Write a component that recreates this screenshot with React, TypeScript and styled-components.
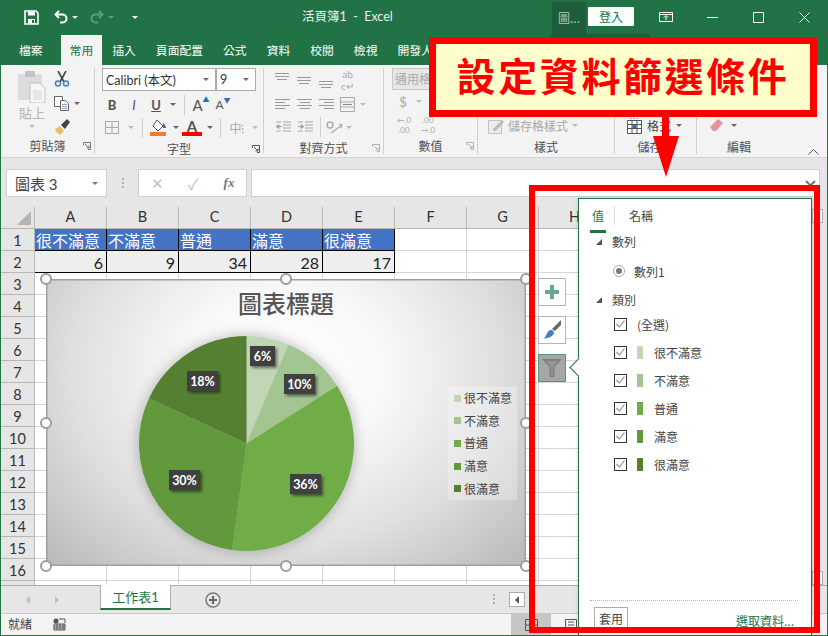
import React from 'react';
import styled, { createGlobalStyle } from 'styled-components';

const GREEN = '#217346';
const CJK = '"Noto Sans CJK TC", sans-serif';
const LATIN = 'Lato, "Noto Sans CJK TC", sans-serif';

const GlobalStyle = createGlobalStyle`
  html, body { margin: 0; padding: 0; background: #fff; }
  * { box-sizing: border-box; }
`;

const Window = styled.div`
  position: relative;
  width: 828px;
  height: 636px;
  overflow: hidden;
  border: 1px solid ${GREEN};
  border-top: none;
  display: flex;
  flex-direction: column;
  font-family: ${CJK};
  font-size: 12px;
  color: #444;
  background: #e6e6e6;
`;

/* title bar */
const TitleBar = styled.div`
  height: 34px;
  flex: none;
  display: flex;
  align-items: stretch;
  background: ${GREEN};
  color: #fff;
`;
const Quick = styled.div`
  width: 301px;
  display: flex;
  align-items: center;
  padding-left: 22px;
`;
const QuickSlot = styled.span<{ $w: number; $flip?: boolean }>`
  width: ${(p) => p.$w}px;
  display: flex;
  align-items: center;
  justify-content: center;
  ${(p) => (p.$flip ? 'transform: scaleX(-1);' : '')}
`;
const DocTitle = styled.div`
  flex: 1;
  line-height: 34px;
  font-size: 12.5px;
  color: #e8f1ec;
  white-space: pre;
  font-family: ${LATIN};
`;
const ContextTab = styled.div`
  width: 34px;
  margin-top: 2px;
  background: #1e5c3a;
  color: #a9cdb9;
  line-height: 32px;
  text-align: center;
  font-size: 12px;
`;
const SignIn = styled.div`
  width: 46px;
  height: 19px;
  margin: 7px 9px 0 2px;
  background: #fff;
  color: ${GREEN};
  border-radius: 1px;
  line-height: 19px;
  text-align: center;
  font-size: 12px;
`;
const WinButton = styled.div`
  width: 46px;
  display: flex;
  align-items: center;
  justify-content: center;
`;

/* tab row */
const TabRow = styled.div`
  height: 31px;
  flex: none;
  display: flex;
  background: ${GREEN};
  color: #fff;
  position: relative;
`;
const RibbonTab = styled.div<{ $active?: boolean; $file?: boolean }>`
  padding: 0 ${(p) => (p.$file ? '18px' : p.$active ? '9px' : '10px')};
  margin-top: 1px;
  line-height: 30px;
  font-size: 11.8px;
  ${(p) => (p.$active ? `background:#f3f3f3;color:${GREEN};` : '')}
`;
const ContextStrip = styled.div`
  width: 99px;
  height: 3px;
  margin-left: auto;
  margin-right: 177px;
  background: #1e5c3a;
`;

/* ribbon */
const Ribbon = styled.div`
  height: 93px;
  flex: none;
  display: flex;
  background: #f3f3f3;
  border-bottom: 1px solid #d4d4d4;
  padding-top: 3px;
  position: relative;
`;
const Group = styled.section<{ $w: number; $last?: boolean }>`
  width: ${(p) => p.$w}px;
  flex: none;
  height: 86px;
  border-right: ${(p) => (p.$last ? 'none' : '1px solid #d0d0d0')};
  display: flex;
  flex-direction: column;
`;
const GroupBody = styled.div<{ $pad?: number; $row?: boolean }>`
  height: 71px;
  padding-left: ${(p) => p.$pad ?? 0}px;
  display: flex;
  flex-direction: ${(p) => (p.$row ? 'row' : 'column')};
`;
const GroupLabel = styled.div`
  position: relative;
  flex: 1;
  padding-top: 1px;
  text-align: center;
  font-size: 12px;
  line-height: 17px;
  color: #505050;
`;
const Launcher = styled.span`
  position: absolute;
  right: 3px;
  top: 6px;
  display: flex;
`;
const PasteCol = styled.div`
  width: 34px;
  display: flex;
  flex-direction: column;
  align-items: center;
  padding-top: 3px;
  color: #b4b4b4;
  font-size: 13px;
  line-height: 15px;
`;
const PasteText = styled.span`
  margin: 2px 0 5px;
`;
const SmallCol = styled.div`
  display: flex;
  flex-direction: column;
  gap: 8px;
  padding-top: 3px;
  margin-left: 4px;
`;
const ToolRow = styled.div<{ $h?: number; $pad?: number; $mt?: number }>`
  height: ${(p) => p.$h ?? 23}px;
  padding-left: ${(p) => p.$pad ?? 0}px;
  margin-top: ${(p) => p.$mt ?? 0}px;
  display: flex;
  align-items: center;
  flex: none;
`;
const Tool = styled.span<{ $w: number; $color?: string; $font?: string; $size?: number; $weight?: number; $italic?: boolean; $line?: boolean }>`
  width: ${(p) => p.$w}px;
  flex: none;
  display: flex;
  align-items: center;
  justify-content: center;
  color: ${(p) => p.$color ?? '#555'};
  font-family: ${(p) => p.$font ?? LATIN};
  font-size: ${(p) => p.$size ?? 12}px;
  font-weight: ${(p) => p.$weight ?? 400};
  font-style: ${(p) => (p.$italic ? 'italic' : 'normal')};
  text-decoration: ${(p) => (p.$line ? 'underline' : 'none')};
`;
const StackTool = styled.span<{ $w: number; $size: number }>`
  width: ${(p) => p.$w}px;
  flex: none;
  display: flex;
  flex-direction: column;
  align-items: center;
  color: #aaa;
  font-family: Lato, sans-serif;
  font-size: ${(p) => p.$size}px;
  line-height: ${(p) => p.$size + 2}px;
`;
const ColorA = styled.span<{ $w: number }>`
  width: ${(p) => p.$w}px;
  height: 17px;
  flex: none;
  text-align: center;
  font-family: ${LATIN};
  font-weight: 700;
  font-size: 15px;
  line-height: 14px;
  color: #555;
  border-bottom: 4px solid #ff0000;
`;
const SizeMark = styled.sup`
  color: #2f6db5;
  font-size: 7px;
  line-height: 7px;
  align-self: flex-start;
`;
const Caret = styled.i<{ $color?: string }>`
  display: block;
  width: 0;
  height: 0;
  border-left: 3.5px solid transparent;
  border-right: 3.5px solid transparent;
  border-top: 3.5px solid ${(p) => p.$color ?? '#666'};
`;
const ToolSep = styled.span<{ $mx: number }>`
  width: 1px;
  height: 20px;
  flex: none;
  margin: 0 ${(p) => p.$mx}px;
  background: #cfcfcf;
`;
const FontSelect = styled.div<{ $w: number }>`
  width: ${(p) => p.$w}px;
  height: 23px;
  flex: none;
  background: #fff;
  border: 1px solid #ababab;
  display: flex;
  align-items: center;
  justify-content: space-between;
  padding: 0 6px 0 3px;
  font-family: ${LATIN};
  font-size: 12.5px;
  color: #333;
`;
const FormatBox = styled.div`
  width: 60px;
  height: 22px;
  margin-left: 8px;
  background: #e6e6e6;
  border: 1px solid #c6c6c6;
  color: #a8a8a8;
  font-size: 12px;
  line-height: 20px;
  padding-left: 2px;
  white-space: nowrap;
  overflow: hidden;
`;
const StyleText = styled.span`
  color: #a8a8a8;
  font-size: 12px;
  margin: 0 4px 0 3px;
`;
const CellText = styled.span`
  color: #444;
  font-size: 12px;
  margin: 0 5px;
`;
const Collapse = styled.span`
  position: absolute;
  right: 8px;
  bottom: 2px;
  display: flex;
`;

/* formula bar */
const FormulaBand = styled.div`
  height: 49px;
  flex: none;
  display: flex;
  padding: 11px 7px 0 5px;
  background: #e6e6e6;
`;
const FieldBox = styled.div<{ $w?: number }>`
  height: 28px;
  ${(p) => (p.$w ? `width:${p.$w}px;flex:none;` : 'flex:1;margin-left:4px;justify-content:flex-end;padding-right:3px;')}
  background: #fff;
  border: 1px solid #d0d0d0;
  display: flex;
  align-items: center;
`;
const NameText = styled.span`
  flex: 1;
  padding-left: 8px;
  font-size: 15px;
  color: #444;
  font-family: ${LATIN};
`;
const GripSlot = styled.div`
  width: 31px;
  flex: none;
  display: flex;
  flex-direction: column;
  align-items: center;
  justify-content: center;
  gap: 2px;
  height: 28px;
`;
const Grip = styled.i`
  width: 2px;
  height: 2px;
  background: #b0b0b0;
`;
const FxText = styled.span`
  font-family: "Liberation Serif", serif;
  font-style: italic;
  font-weight: 700;
  font-size: 13px;
  color: #777;
`;

/* sheet */
const SheetRow = styled.div`
  height: 378px;
  flex: none;
  display: flex;
`;
const Sheet = styled.div`
  position: relative;
  width: 811px;
  flex: none;
  overflow: hidden;
  background: #fff;
`;
const SheetGrid = styled.div`
  display: grid;
  grid-template-columns: 34px repeat(11, 72px);
  grid-auto-rows: 22px;
`;
const Corner = styled.div`
  background: #e6e6e6;
  border-right: 1px solid #b8b8b8;
  border-bottom: 1px solid #b8b8b8;
  position: relative;
  &::after {
    content: '';
    position: absolute;
    right: 3px;
    bottom: 3px;
    border-left: 14px solid transparent;
    border-bottom: 14px solid #b5b5b5;
  }
`;
const HeadCell = styled.div<{ $row?: boolean }>`
  background: #e6e6e6;
  border-right: 1px solid #b8b8b8;
  border-bottom: 1px solid #b8b8b8;
  display: flex;
  align-items: center;
  justify-content: center;
  padding: ${(p) => (p.$row ? '2px 0 0' : '0 0 3px')};
  font-family: ${LATIN};
  font-size: 14.5px;
  color: #333;
`;
const Cell = styled.div<{ $tone?: 'head' | 'value' }>`
  border-right: 1px solid ${(p) => (p.$tone ? '#000' : '#d6d6d6')};
  border-bottom: 1px solid ${(p) => (p.$tone ? '#000' : '#d6d6d6')};
  background: ${(p) => (p.$tone === 'head' ? '#4472c4' : p.$tone === 'value' ? '#eeeeee' : '#fff')};
  color: ${(p) => (p.$tone === 'head' ? '#fff' : '#222')};
  text-align: ${(p) => (p.$tone === 'value' ? 'right' : 'left')};
  padding: 0 3px 0 1px;
  font-family: ${LATIN};
  font-size: 16px;
  line-height: 23px;
  white-space: nowrap;
  overflow: hidden;
`;
const VScroll = styled.div`
  flex: 1;
  padding-top: 2px;
  display: flex;
  flex-direction: column;
  justify-content: space-between;
  padding-right: 4px;
`;
const ScrollButton = styled.div`
  height: 14px;
  background: #fff;
  border: 1px solid #ababab;
`;

/* chart */
const Chart = styled.div`
  position: absolute;
  left: 45px;
  top: 72px;
  width: 480px;
  height: 287px;
  box-shadow: inset 0 0 0 1.5px #a0a0a0;
  background: radial-gradient(ellipse farthest-corner at 50% 32%, #fff 0%, #f8f8f8 30%, #e0e0e0 62%, #b8b8b8 100%);
`;
const ChartTitle = styled.div`
  position: relative;
  text-align: center;
  padding-top: 7px;
  font-size: 24px;
  line-height: 34px;
  color: #565656;
  font-weight: 500;
`;
const PieSvg = styled.svg`
  position: absolute;
  left: 0;
  top: 0;
`;
const Legend = styled.div`
  position: absolute;
  right: 9px;
  top: 108px;
  width: 69px;
  height: 113px;
  padding: 0 0 0 6px;
  background: rgba(255, 255, 255, 0.28);
  display: flex;
  flex-direction: column;
  justify-content: space-around;
`;
const LegendRow = styled.div`
  display: flex;
  align-items: center;
  gap: 3px;
  font-size: 12px;
  line-height: 16px;
  color: #444;
  white-space: nowrap;
`;
const LegendSwatch = styled.i<{ $c: string }>`
  width: 7px;
  height: 7px;
  background: ${(p) => p.$c};
`;
const Handle = styled.i<{ $x: number; $y: number }>`
  position: absolute;
  left: ${(p) => p.$x}%;
  top: ${(p) => p.$y}%;
  width: 12px;
  height: 12px;
  margin: -6px 0 0 -6px;
  border-radius: 50%;
  background: #fff;
  border: 2px solid #9c9c9c;
`;

/* chart side tools */
const ChartTools = styled.div`
  position: absolute;
  left: 537px;
  top: 278px;
  display: flex;
  flex-direction: column;
  gap: 10px;
`;
const ChartTool = styled.div<{ $on?: boolean }>`
  width: 28px;
  height: 28px;
  display: flex;
  align-items: center;
  justify-content: center;
  background: ${(p) => (p.$on ? '#a6a6a6' : '#fff')};
  border: 1px solid ${(p) => (p.$on ? '#4f9a73' : '#b4b4b4')};
`;

/* filter pane */
const Pane = styled.div`
  position: absolute;
  left: 577px;
  top: 198px;
  width: 234px;
  height: 438px;
  background: #fff;
  border: 1px solid ${GREEN};
  display: flex;
  flex-direction: column;
  box-shadow: 0 0 4px rgba(0, 0, 0, 0.15);
  &::before {
    content: '';
    position: absolute;
    left: -7px;
    top: 162px;
    width: 12px;
    height: 12px;
    background: #fff;
    border-left: 1px solid ${GREEN};
    border-bottom: 1px solid ${GREEN};
    transform: rotate(45deg);
  }
`;
const PaneTabs = styled.div`
  height: 34px;
  flex: none;
  display: flex;
  align-items: flex-start;
  padding: 7px 0 0 11px;
`;
const PaneTab = styled.div<{ $on?: boolean }>`
  height: 27px;
  padding: 0 ${(p) => (p.$on ? '2px' : '0')};
  line-height: 20px;
  color: ${(p) => (p.$on ? GREEN : '#444')};
  border-bottom: 3px solid ${(p) => (p.$on ? GREEN : 'transparent')};
`;
const PaneTabSep = styled.span`
  width: 1px;
  height: 19px;
  background: #dcdcdc;
  margin: 0 14px 0 8px;
`;
const TreeHead = styled.div`
  height: 18px;
  display: flex;
  align-items: center;
  padding-left: 17px;
  gap: 10px;
  line-height: 18px;
`;
const TreeArrow = styled.i`
  width: 0;
  height: 0;
  border-left: 6px solid transparent;
  border-bottom: 6px solid #555;
`;
const RadioRow = styled.div`
  height: 28px;
  margin: 6px 0;
  display: flex;
  align-items: center;
  padding-left: 34px;
  gap: 9px;
`;
const Radio = styled.i`
  width: 12px;
  height: 12px;
  border-radius: 50%;
  border: 1px solid #a8a8a8;
  display: flex;
  align-items: center;
  justify-content: center;
  &::after {
    content: '';
    width: 6px;
    height: 6px;
    border-radius: 50%;
    background: #777;
  }
`;
const CheckList = styled.div`
  margin-top: 1px;
`;
const CheckRow = styled.div`
  height: 28px;
  display: flex;
  align-items: center;
  padding-left: 35px;
`;
const CheckBox = styled.span`
  width: 13px;
  height: 13px;
  flex: none;
  border: 1px solid #333;
  display: flex;
  align-items: center;
  justify-content: center;
`;
const CheckSwatch = styled.i<{ $c: string }>`
  width: 6px;
  height: 13px;
  margin: 0 11px 0 10px;
  background: ${(p) => p.$c};
`;
const AllLabel = styled.span`
  margin-left: 10px;
`;
const PaneFooter = styled.div`
  margin: auto 13px 0 11px;
  height: 35px;
  border-top: 1px dotted #b8b8b8;
  padding: 6px 4px 0 4px;
  display: flex;
  justify-content: space-between;
`;
const ApplyButton = styled.div`
  width: 34px;
  height: 24px;
  border: 1px solid #ababab;
  text-align: center;
  line-height: 22px;
  color: #444;
`;
const SelectLink = styled.span`
  margin-top: 6px;
  line-height: 15px;
  color: ${GREEN};
  text-decoration: underline;
`;

/* sheet tabs */
const TabBar = styled.div`
  height: 28px;
  flex: none;
  display: flex;
  align-items: flex-start;
  background: #e6e6e6;
  border-top: 1px solid #ababab;
`;
const NavArrow = styled.i<{ $left?: boolean; $ml: number }>`
  margin: 10px 0 0 ${(p) => p.$ml}px;
  width: 0;
  height: 0;
  border-top: 4px solid transparent;
  border-bottom: 4px solid transparent;
  ${(p) => (p.$left ? 'border-right: 4px solid #bdbdbd;' : 'border-left: 4px solid #bdbdbd;')}
`;
const SheetTab = styled.div`
  width: 71px;
  height: 25px;
  margin: -1px 0 0 41px;
  background: #fff;
  border: 1px solid #ababab;
  border-top: none;
  border-bottom: 2px solid ${GREEN};
  color: ${GREEN};
  text-align: center;
  line-height: 25px;
  font-size: 13px;
  font-family: ${LATIN};
`;
const AddSheet = styled.span`
  margin: 6px 0 0 34px;
  display: flex;
`;
const TabGrip = styled.div`
  margin: 8px 0 0 272px;
  display: flex;
  flex-direction: column;
  gap: 2px;
`;
const HScroll = styled.div`
  width: 16px;
  height: 15px;
  margin: 6px 0 0 14px;
  background: #fff;
  border: 1px solid #ababab;
  display: flex;
  align-items: center;
  justify-content: center;
`;
const HArrow = styled.i`
  width: 0;
  height: 0;
  border-top: 4px solid transparent;
  border-bottom: 4px solid transparent;
  border-right: 4px solid #555;
`;

/* status bar */
const StatusBar = styled.div`
  height: 22px;
  flex: none;
  display: flex;
  align-items: stretch;
  background: #f3f3f3;
  border-top: 1px solid #c8c8c8;
`;
const StatusText = styled.span`
  margin-left: 7px;
  width: 45px;
  line-height: 20px;
  color: #444;
`;
const StatusIcon = styled.span`
  display: flex;
  align-items: center;
`;
const ViewButton = styled.div<{ $on?: boolean; $ml?: number }>`
  width: 40px;
  margin-left: ${(p) => p.$ml ?? 0}px;
  background: ${(p) => (p.$on ? '#c6c6c6' : 'transparent')};
  display: flex;
  align-items: center;
  justify-content: center;
`;

/* hand-drawn callouts laid over the screenshot */
const Callout = styled.div`
  position: absolute;
  left: 428px;
  top: 37px;
  width: 388px;
  height: 80px;
  background: #ffffcc;
  border: 7px solid #ff0000;
  color: #ff0000;
  font-weight: 700;
  font-size: 39px;
  letter-spacing: 2.6px;
  line-height: 61px;
  text-align: center;
  white-space: nowrap;
`;
const CalloutArrow = styled.svg`
  position: absolute;
  left: 652px;
  top: 117px;
`;
const RedFrame = styled.div`
  position: absolute;
  left: 528px;
  top: 185px;
  width: 291px;
  height: 448px;
  border: 6px solid #ff0000;
`;

function SaveIcon() {
  return (
    <svg width="15" height="15" viewBox="0 0 15 15">
      <path d="M1 1h11l2 2v11H1z" fill="none" stroke="#fff" strokeWidth="1.6" />
      <path d="M4 1.5h7v4H4zM4 9h7v5H4z" fill="#fff" />
      <path d="M8 10h2v3H8z" fill={GREEN} />
    </svg>
  );
}
function UndoIcon({ color }: { color: string }) {
  return (
    <svg width="15" height="14" viewBox="0 0 15 14">
      <path d="M5 1L1.5 4.5 5 8" fill="none" stroke={color} strokeWidth="2" />
      <path d="M2 4.5h6.5a4 4 0 0 1 0 8H6" fill="none" stroke={color} strokeWidth="2" />
    </svg>
  );
}
function AlignIcon({ rows, offset = 0 }: { rows: [number, number][]; offset?: number }) {
  return (
    <svg width="16" height="16" viewBox="0 0 16 16">
      {rows.map(([x, w], i) => (
        <rect key={i} x={x} y={offset + i * 3} width={w} height="1" fill="#9a9a9a" />
      ))}
    </svg>
  );
}
function LauncherIcon({ color = '#777' }: { color?: string }) {
  return (
    <svg width="8" height="8" viewBox="0 0 8 8">
      <path d="M0.5 3V0.5H7.5V7.5H5M2 2l4 4M6 3.5V6H3.5" fill="none" stroke={color} strokeWidth="1" />
    </svg>
  );
}
function PasteIcon() {
  return (
    <svg width="28" height="32" viewBox="0 0 28 32">
      <rect x="0" y="3" width="24" height="26" fill="#dcdcdc" />
      <rect x="7" y="0" width="10" height="6" fill="#c4c4c4" />
      <path d="M12 12h10l5 5v15H12z" fill="#f6f6f6" stroke="#c0c0c0" />
      <path d="M15 19h9v10h-9z" fill="#e6e6e6" />
    </svg>
  );
}
function ScissorsIcon() {
  return (
    <svg width="16" height="16" viewBox="0 0 16 16">
      <path d="M4 0l6 11M12 0L6 11" stroke="#444" strokeWidth="1.6" fill="none" />
      <circle cx="4" cy="12.5" r="2.5" fill="none" stroke="#4a7fb5" strokeWidth="1.5" />
      <circle cx="12" cy="12.5" r="2.5" fill="none" stroke="#4a7fb5" strokeWidth="1.5" />
    </svg>
  );
}
function CopyIcon() {
  return (
    <svg width="16" height="15" viewBox="0 0 16 15">
      <path d="M0.5 0.5h8v10h-8z" fill="#fff" stroke="#666" />
      <path d="M6.5 4.5h5l3 3v7h-8z" fill="#fff" stroke="#666" />
      <path d="M8 8.5h5M8 10.5h5M8 12.5h5" stroke="#8aa6c4" />
    </svg>
  );
}
function PainterIcon() {
  return (
    <svg width="16" height="16" viewBox="0 0 16 16">
      <path d="M1 10l5-3 4 5-4 4c-2-1-4-3-5-6z" fill="#e9bd6b" />
      <path d="M7 6l6-6 3 3-5 7z" fill="#444" />
    </svg>
  );
}
function BordersIcon() {
  return (
    <svg width="14" height="13" viewBox="0 0 14 13">
      <path d="M0.5 0.5h13v12h-13zM7 0.5v12M0.5 6.5h13" fill="none" stroke="#a8a8a8" />
    </svg>
  );
}
function FillIcon() {
  return (
    <svg width="17" height="16" viewBox="0 0 17 16">
      <path d="M7 0l6 6-5 5-5-5z" fill="#fff" stroke="#555" />
      <path d="M13 3c2 2 3 3 3 5h-3z" fill="#2f6db5" />
      <rect x="0" y="12" width="16" height="4" fill="#ed7d31" />
    </svg>
  );
}
function ArrowsBox({ flip }: { flip?: boolean }) {
  return (
    <svg width="16" height="13" viewBox="0 0 16 13">
      <path d="M8 1h8M8 4h8M8 7h8M8 10h8M1 1h5M1 10h5" stroke="#a8a8a8" />
      <path d={flip ? 'M1 5.5h3V3.5l3 2-3 2v-2' : 'M7 5.5H4V3.5l-3 2 3 2v-2'} fill="#a8a8a8" stroke="#a8a8a8" />
    </svg>
  );
}
function MergeIcon() {
  return (
    <svg width="15" height="15" viewBox="0 0 15 15">
      <path d="M0.5 0.5h14v14h-14zM0.5 5h14M0.5 10h14" fill="none" stroke="#a8a8a8" />
      <path d="M3 7.5h9" stroke="#888" />
    </svg>
  );
}
function OrientIcon() {
  return (
    <svg width="18" height="16" viewBox="0 0 18 16">
      <path d="M6 14L17 6M14 5l3 1-1 3" stroke="#aaa" fill="none" strokeWidth="1.2" />
      <circle cx="5" cy="6" r="3" fill="none" stroke="#aaa" strokeWidth="1.4" />
    </svg>
  );
}
function StyleIcon() {
  return (
    <svg width="17" height="16" viewBox="0 0 17 16">
      <path d="M0.5 2.5h13v13h-13z" fill="#ededed" stroke="#c2c2c2" />
      <path d="M5 11L14 2l2 2-8 9H5z" fill="#bcbcbc" />
    </svg>
  );
}
function TableIcon() {
  return (
    <svg width="15" height="16" viewBox="0 0 15 16">
      <path d="M0.5 2.5h14v13h-14zM0.5 6.5h14M0.5 10.5h14M5 2.5v13M10 2.5v13" fill="#fff" stroke="#555" />
      <rect x="5.5" y="7" width="4" height="3" fill="#2f6db5" />
      <path d="M3 0h9" stroke="#2f6db5" strokeDasharray="2 1" />
    </svg>
  );
}
function EraserIcon() {
  return (
    <svg width="14" height="13" viewBox="0 0 14 13">
      <path d="M0 8l8-8 5 4-7 8H3z" fill="#e9919c" />
    </svg>
  );
}
function FunnelIcon() {
  return (
    <svg width="20" height="18" viewBox="0 0 20 18">
      <path d="M0 0h20l-7.5 8v10h-5V8z" fill="#808080" />
      <path d="M4 2h12l-5 5.5V16H9V7.5z" fill="#969696" />
    </svg>
  );
}
function BrushIcon() {
  return (
    <svg width="20" height="20" viewBox="0 0 20 20">
      <path d="M19 0v5l-6 6-3-2z" fill="#666" />
      <path d="M10 10l2 2c0 4-5 6-11 7 3-1 3-5 5-7 1-2 3-2 4-2z" fill="#3f7cc0" />
    </svg>
  );
}
function SheetGlyph() {
  return (
    <svg width="13" height="13" viewBox="0 0 13 13">
      <circle cx="3" cy="3" r="2.5" fill="#555" />
      <path d="M1 6h11v6H1zM1 8h11M1 10h11M4 6v6M7 6v6M10 6v6M6 1h6v4" fill="none" stroke="#555" />
    </svg>
  );
}
function CheckMark() {
  return (
    <svg width="9" height="8" viewBox="0 0 9 8">
      <path d="M.5 4l3 3 5-6.5" fill="none" stroke="#8a8a8a" strokeWidth="1.1" />
    </svg>
  );
}

const pieData = [
  { name: '很不滿意', value: 6, color: '#c1d6b5' },
  { name: '不滿意', value: 9, color: '#a3c591' },
  { name: '普通', value: 34, color: '#70ad47' },
  { name: '滿意', value: 28, color: '#62993c' },
  { name: '很滿意', value: 17, color: '#548030' },
];
const pieLabels = [
  { text: '6%', x: 204, y: 67, w: 25 },
  { text: '10%', x: 238, y: 95, w: 31 },
  { text: '36%', x: 244, y: 195, w: 31 },
  { text: '30%', x: 123, y: 191, w: 31 },
  { text: '18%', x: 141, y: 92, w: 31 },
];

function Pie() {
  const cx = 200.5;
  const cy = 164.5;
  const r = 107.5;
  const total = pieData.reduce((sum, d) => sum + d.value, 0);
  let angle = -Math.PI / 2;
  return (
    <PieSvg width="480" height="287" viewBox="0 0 480 287">
      <defs>
        <filter id="pieShadow" x="-20%" y="-20%" width="140%" height="140%">
          <feDropShadow dx="0" dy="0" stdDeviation="7" floodColor="#000" floodOpacity="0.28" />
        </filter>
        <filter id="tagShadow" x="-30%" y="-30%" width="170%" height="170%">
          <feDropShadow dx="2" dy="2" stdDeviation="1.5" floodColor="#000" floodOpacity="0.5" />
        </filter>
      </defs>
      <g filter="url(#pieShadow)">
        {pieData.map((d) => {
          const start = angle;
          angle += (d.value / total) * Math.PI * 2;
          const large = angle - start > Math.PI ? 1 : 0;
          const path = `M${cx} ${cy}L${cx + r * Math.cos(start)} ${cy + r * Math.sin(start)}A${r} ${r} 0 ${large} 1 ${cx + r * Math.cos(angle)} ${cy + r * Math.sin(angle)}Z`;
          return <path key={d.name} d={path} fill={d.color} />;
        })}
      </g>
      {pieLabels.map((l) => (
        <g key={l.text}>
          <rect x={l.x} y={l.y} width={l.w} height="20" fill="#403f40" filter="url(#tagShadow)" />
          <text x={l.x + l.w / 2} y={l.y + 14.5} textAnchor="middle" fill="#fff" fontFamily="Lato, sans-serif" fontWeight="700" fontSize="12.5">
            {l.text}
          </text>
        </g>
      ))}
    </PieSvg>
  );
}

// columns past H sit under the pane, so they carry no letter
const columns = ['A', 'B', 'C', 'D', 'E', 'F', 'G', 'H', '', '', ''];
const headRow = ['很不滿意', '不滿意', '普通', '滿意', '很滿意'];
const valueRow = [6, 9, 34, 28, 17];
const rowNumbers = Array.from({ length: 17 }, (_, i) => i + 1);
const handles: [number, number][] = [
  [0, 0], [50, 0], [100, 0], [0, 50], [100, 50], [0, 100], [50, 100], [100, 100],
];
const tabs = ['插入', '頁面配置', '公式', '資料', '校閱', '檢視', '開發人員'];

export default function App() {
  return (
    <Window>
      <GlobalStyle />
      <TitleBar>
        <Quick>
          <QuickSlot $w={16}><SaveIcon /></QuickSlot>
          <QuickSlot $w={14} />
          <QuickSlot $w={16}><UndoIcon color="#fff" /></QuickSlot>
          <QuickSlot $w={12}><Caret $color="#dce9e2" /></QuickSlot>
          <QuickSlot $w={8} />
          <QuickSlot $w={16} $flip><UndoIcon color="#5d9b79" /></QuickSlot>
          <QuickSlot $w={12}><Caret $color="#5d9b79" /></QuickSlot>
          <QuickSlot $w={14} />
          <QuickSlot $w={8}><Caret $color="#fff" /></QuickSlot>
        </Quick>
        <DocTitle>活頁簿1  -  Excel</DocTitle>
        <ContextTab>圖...</ContextTab>
        <SignIn>登入</SignIn>
        <WinButton>
          <svg width="14" height="10" viewBox="0 0 14 10">
            <path d="M0.5 0.5h13v9h-13zM0.5 2.5h13M7 8V4M5 5.5L7 3.5l2 2" fill="none" stroke="#fff" />
          </svg>
        </WinButton>
        <WinButton>
          <svg width="11" height="1" viewBox="0 0 11 1"><path d="M0 .5h11" stroke="#fff" /></svg>
        </WinButton>
        <WinButton>
          <svg width="11" height="11" viewBox="0 0 11 11"><path d="M.5.5h10v10H.5z" fill="none" stroke="#fff" /></svg>
        </WinButton>
        <WinButton>
          <svg width="11" height="11" viewBox="0 0 11 11"><path d="M.5.5l10 10M10.5.5l-10 10" stroke="#fff" /></svg>
        </WinButton>
      </TitleBar>

      <TabRow>
        <RibbonTab $file>檔案</RibbonTab>
        <RibbonTab $active>常用</RibbonTab>
        {tabs.map((t) => (
          <RibbonTab key={t}>{t}</RibbonTab>
        ))}
        <ContextStrip />
      </TabRow>

      <Ribbon>
        <Group $w={94}>
          <GroupBody $row $pad={14}>
            <PasteCol>
              <PasteIcon />
              <PasteText>貼上</PasteText>
              <Caret $color="#b8b8b8" />
            </PasteCol>
            <SmallCol>
              <Tool $w={18}><ScissorsIcon /></Tool>
              <ToolRow $h={16}>
                <Tool $w={18}><CopyIcon /></Tool>
                <Tool $w={12}><Caret /></Tool>
              </ToolRow>
              <Tool $w={18}><PainterIcon /></Tool>
            </SmallCol>
          </GroupBody>
          <GroupLabel>剪貼簿<Launcher><LauncherIcon /></Launcher></GroupLabel>
        </Group>

        <Group $w={169}>
          <GroupBody>
            <ToolRow $h={23} $pad={7}>
              <FontSelect $w={114}>Calibri (本文)<Caret /></FontSelect>
              <FontSelect $w={40}>9<Caret /></FontSelect>
            </ToolRow>
            <ToolRow $h={23} $pad={6} $mt={2}>
              <Tool $w={22} $weight={900} $size={13}>B</Tool>
              <Tool $w={22} $italic $size={13}>I</Tool>
              <Tool $w={22} $line $weight={700} $size={13}>U</Tool>
              <Tool $w={12}><Caret /></Tool>
              <ToolSep $mx={5} />
              <Tool $w={22} $size={15}>A<SizeMark>▲</SizeMark></Tool>
              <Tool $w={22} $size={12}>A<SizeMark>▼</SizeMark></Tool>
            </ToolRow>
            <ToolRow $h={23} $pad={5}>
              <Tool $w={24}><BordersIcon /></Tool>
              <Tool $w={14}><Caret $color="#bbb" /></Tool>
              <ToolSep $mx={4} />
              <Tool $w={23}><FillIcon /></Tool>
              <Tool $w={12}><Caret /></Tool>
              <ColorA $w={20}>A</ColorA>
              <Tool $w={15}><Caret /></Tool>
              <ToolSep $mx={3} />
              <Tool $w={26} $color="#aaa" $font={CJK} $size={12}>中⁝</Tool>
              <Tool $w={10}><Caret $color="#bbb" /></Tool>
            </ToolRow>
          </GroupBody>
          <GroupLabel>字型<Launcher><LauncherIcon color="#555" /></Launcher></GroupLabel>
        </Group>

        <Group $w={120}>
          <GroupBody $pad={8}>
            <ToolRow $h={24}>
              <Tool $w={22}><AlignIcon rows={[[0, 14], [0, 14], [2, 10]]} offset={1} /></Tool>
              <Tool $w={22}><AlignIcon rows={[[0, 14], [0, 14], [2, 10]]} offset={5} /></Tool>
              <Tool $w={22}><AlignIcon rows={[[0, 14], [0, 14], [2, 10]]} offset={9} /></Tool>
              <StackTool $w={19} $size={10}><span>ab</span><span>c↵</span></StackTool>
            </ToolRow>
            <ToolRow $h={24}>
              <Tool $w={22}><AlignIcon rows={[[0, 15], [0, 10], [0, 15], [0, 10]]} offset={3} /></Tool>
              <Tool $w={22}><AlignIcon rows={[[0, 15], [3, 10], [0, 15], [3, 10]]} offset={3} /></Tool>
              <Tool $w={22}><AlignIcon rows={[[0, 15], [5, 10], [0, 15], [5, 10]]} offset={3} /></Tool>
              <Tool $w={19}><MergeIcon /></Tool>
              <Tool $w={12}><Caret $color="#bbb" /></Tool>
            </ToolRow>
            <ToolRow $h={22}>
              <Tool $w={22}><ArrowsBox /></Tool>
              <Tool $w={22}><ArrowsBox flip /></Tool>
              <ToolSep $mx={4} />
              <Tool $w={18}><OrientIcon /></Tool>
              <Tool $w={12}><Caret $color="#bbb" /></Tool>
            </ToolRow>
          </GroupBody>
          <GroupLabel>對齊方式<Launcher><LauncherIcon color="#b0b0b0" /></Launcher></GroupLabel>
        </Group>

        <Group $w={94}>
          <GroupBody>
            <FormatBox>通用格式</FormatBox>
            <ToolRow $h={23} $pad={8}>
              <Tool $w={22} $size={14} $color="#aaa">$</Tool>
              <Tool $w={10}><Caret $color="#bbb" /></Tool>
            </ToolRow>
            <ToolRow $h={23} $pad={8}>
              <StackTool $w={24} $size={8}><span>←.0</span><span>.00</span></StackTool>
              <StackTool $w={24} $size={8}><span>.00</span><span>→.0</span></StackTool>
            </ToolRow>
          </GroupBody>
          <GroupLabel>數值<Launcher><LauncherIcon color="#b0b0b0" /></Launcher></GroupLabel>
        </Group>

        <Group $w={137}>
          <GroupBody $pad={10}>
            <ToolRow $h={46} />
            <ToolRow $h={23}>
              <StyleIcon />
              <StyleText>儲存格樣式</StyleText>
              <Caret $color="#bbb" />
            </ToolRow>
          </GroupBody>
          <GroupLabel>樣式</GroupLabel>
        </Group>

        <Group $w={82}>
          <GroupBody $pad={12}>
            <ToolRow $h={46} />
            <ToolRow $h={23}>
              <TableIcon />
              <CellText>格式</CellText>
              <Caret />
            </ToolRow>
          </GroupBody>
          <GroupLabel>儲存格</GroupLabel>
        </Group>

        <Group $w={84} $last>
          <GroupBody $pad={13}>
            <ToolRow $h={46} />
            <ToolRow $h={23}>
              <EraserIcon />
              <Tool $w={20}><Caret /></Tool>
            </ToolRow>
          </GroupBody>
          <GroupLabel>編輯</GroupLabel>
        </Group>
        <Collapse>
          <svg width="11" height="6" viewBox="0 0 11 6"><path d="M.5 5.5l5-5 5 5" fill="none" stroke="#555" /></svg>
        </Collapse>
      </Ribbon>

      <FormulaBand>
        <FieldBox $w={101}>
          <NameText>圖表 3</NameText>
          <Tool $w={22}><Caret $color="#777" /></Tool>
        </FieldBox>
        <GripSlot><Grip /><Grip /><Grip /></GripSlot>
        <FieldBox $w={109}>
          <Tool $w={36} $size={15} $color="#c0c0c0">✕</Tool>
          <Tool $w={36} $size={15} $color="#c0c0c0">✓</Tool>
          <Tool $w={36}><FxText>fx</FxText></Tool>
        </FieldBox>
        <FieldBox>
          <svg width="11" height="7" viewBox="0 0 11 7"><path d="M1 1l4.5 4.5L10 1" fill="none" stroke="#777" strokeWidth="2" /></svg>
        </FieldBox>
      </FormulaBand>

      <SheetRow>
        <Sheet>
          <SheetGrid>
            <Corner />
            {columns.map((c, i) => (
              <HeadCell key={i}>{c}</HeadCell>
            ))}
            {rowNumbers.map((n) => (
              <React.Fragment key={n}>
                <HeadCell $row>{n < 17 ? n : ''}</HeadCell>
                {columns.map((_, i) => {
                  if (n === 1 && i < 5) return <Cell key={i} $tone="head">{headRow[i]}</Cell>;
                  if (n === 2 && i < 5) return <Cell key={i} $tone="value">{valueRow[i]}</Cell>;
                  return <Cell key={i} />;
                })}
              </React.Fragment>
            ))}
          </SheetGrid>
          <Chart>
            <Pie />
            <ChartTitle>圖表標題</ChartTitle>
            <Legend>
              {pieData.map((d) => (
                <LegendRow key={d.name}>
                  <LegendSwatch $c={d.color} />
                  {d.name}
                </LegendRow>
              ))}
            </Legend>
            {handles.map(([x, y]) => (
              <Handle key={`${x}-${y}`} $x={x} $y={y} />
            ))}
          </Chart>
        </Sheet>
        <VScroll>
          <ScrollButton />
          <ScrollButton />
        </VScroll>
      </SheetRow>

      <TabBar>
        <NavArrow $left $ml={25} />
        <NavArrow $ml={25} />
        <SheetTab>工作表1</SheetTab>
        <AddSheet>
          <svg width="16" height="16" viewBox="0 0 16 16">
            <circle cx="8" cy="8" r="7" fill="none" stroke="#777" strokeWidth="1.4" />
            <path d="M8 4v8M4 8h8" stroke="#666" strokeWidth="2" />
          </svg>
        </AddSheet>
        <TabGrip><Grip /><Grip /><Grip /></TabGrip>
        <HScroll><HArrow /></HScroll>
      </TabBar>

      <StatusBar>
        <StatusText>就緒</StatusText>
        <StatusIcon><SheetGlyph /></StatusIcon>
        <ViewButton $on $ml={445}>
          <svg width="13" height="12" viewBox="0 0 13 12"><path d="M.5.5h12v11H.5zM.5 6h12M6.5.5v11" fill="none" stroke="#555" /></svg>
        </ViewButton>
        <ViewButton>
          <svg width="12" height="12" viewBox="0 0 12 12"><path d="M.5.5h11v11H.5zM3 3h6M3 6h6M3 9h6" fill="none" stroke="#555" /></svg>
        </ViewButton>
      </StatusBar>

      <ChartTools>
        <ChartTool>
          <svg width="16" height="16" viewBox="0 0 16 16"><path d="M8 1v14M1 8h14" stroke="#6aa88f" strokeWidth="4" /></svg>
        </ChartTool>
        <ChartTool><BrushIcon /></ChartTool>
        <ChartTool $on><FunnelIcon /></ChartTool>
      </ChartTools>

      <Pane>
        <PaneTabs>
          <PaneTab $on>值</PaneTab>
          <PaneTabSep />
          <PaneTab>名稱</PaneTab>
        </PaneTabs>
        <TreeHead><TreeArrow />數列</TreeHead>
        <RadioRow><Radio />數列1</RadioRow>
        <TreeHead><TreeArrow />類別</TreeHead>
        <CheckList>
          <CheckRow>
            <CheckBox><CheckMark /></CheckBox>
            <AllLabel>(全選)</AllLabel>
          </CheckRow>
          {pieData.map((d) => (
            <CheckRow key={d.name}>
              <CheckBox><CheckMark /></CheckBox>
              <CheckSwatch $c={d.color} />
              {d.name}
            </CheckRow>
          ))}
        </CheckList>
        <PaneFooter>
          <ApplyButton>套用</ApplyButton>
          <SelectLink>選取資料...</SelectLink>
        </PaneFooter>
      </Pane>

      <Callout>設定資料篩選條件</Callout>
      <CalloutArrow width="28" height="60" viewBox="0 0 28 60">
        <path d="M9 0h7v19h10L13 60 0 19h9z" fill="#ff0000" />
      </CalloutArrow>
      <RedFrame />
    </Window>
  );
}
